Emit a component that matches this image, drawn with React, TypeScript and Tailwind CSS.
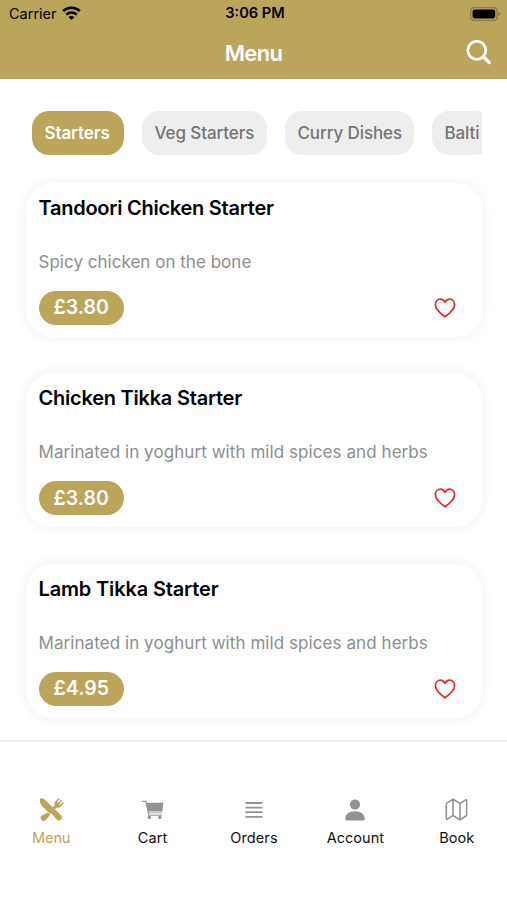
import React, { useState } from 'react';
import { IoMapOutline } from 'react-icons/io5';

interface MenuItem {
    name: string;
    nameClass: string;
    description: string;
    descriptionClass: string;
    price: string;
}

interface Tab {
    label: string;
    icon: React.ReactNode;
    textClass: string;
}

const CATEGORIES = [
    { label: 'Starters', widthClass: 'w-[92px]' },
    { label: 'Veg Starters', widthClass: 'w-[125px]' },
    { label: 'Curry Dishes', widthClass: 'w-[129px]' },
    { label: 'Balti', widthClass: 'w-[60px]' },
];

const ITEMS: MenuItem[] = [
    { name: 'Tandoori Chicken Starter', nameClass: 'tracking-[-0.25px]', description: 'Spicy chicken on the bone', descriptionClass: 'tracking-[0.02px]', price: '£3.80' },
    { name: 'Chicken Tikka Starter', nameClass: 'tracking-[-0.23px]', description: 'Marinated in yoghurt with mild spices and herbs', descriptionClass: 'tracking-[0.07px]', price: '£3.80' },
    { name: 'Lamb Tikka Starter', nameClass: 'tracking-[-0.15px]', description: 'Marinated in yoghurt with mild spices and herbs', descriptionClass: 'tracking-[0.07px]', price: '£4.95' },
];

const WifiIcon: React.FC = () => (
    <svg width="19" height="15" viewBox="0 0 19 15" fill="none" stroke="currentColor" strokeWidth="2.5">
        <path d="M1.2 5.2a11.8 11.8 0 0 1 16.6 0" />
        <path d="M4.3 8.6a7.4 7.4 0 0 1 10.4 0" />
        <path d="M9.5 14 6.6 11.2a4.1 4.1 0 0 1 5.8 0z" fill="currentColor" stroke="none" />
    </svg>
);

const BatteryIcon: React.FC = () => (
    <svg width="31" height="14" viewBox="0 0 31 14">
        <rect x="0.7" y="0.7" width="26.4" height="12.6" rx="3.4" fill="none" stroke="#8a7a43" strokeWidth="1.3" />
        <rect x="2.6" y="2.6" width="22.6" height="8.8" rx="1.8" fill="#000" />
        <path d="M28.5 4.8q1.7.8 1.7 2.2t-1.7 2.2z" fill="#7d6e3b" />
    </svg>
);

const SearchIcon: React.FC = () => (
    <svg width="26" height="26" viewBox="0 0 26 26" fill="none" stroke="currentColor" strokeLinecap="round">
        <circle cx="10.8" cy="10.3" r="9" strokeWidth="2.8" />
        <path d="m17.8 17.3 5.4 5.2" strokeWidth="3.3" />
    </svg>
);

const HeartIcon: React.FC = () => (
    <svg width="22" height="20" viewBox="0 0 22 20" fill="none" stroke="#e8282b" strokeWidth="1.7" strokeLinejoin="round">
        <path d="M11 4.3C9.9 2.1 8.4 1.2 6.4 1.2c-3 0-5 2.4-5 5.3 0 4.6 4.3 8.5 9.6 12.3 5.3-3.8 9.6-7.7 9.6-12.3 0-2.9-2-5.3-5-5.3-2 0-3.5.9-4.6 3.1z" />
    </svg>
);

const CutleryIcon: React.FC = () => (
    <svg width="25" height="25" viewBox="0 0 25 25" fill="currentColor">
        <path d="M1.3 1.4C3.2.9 5 1.8 6.6 3.4L21.8 18.1a3 3 0 0 1 .3 4.2 3 3 0 0 1-4.4.1l-5.1-5.6-1.9-.4L3.2 9.3C1 7.1.2 3.4 1.3 1.4z" />
        <path d="m9 15.6 2.4 2.3-4.7 5a3 3 0 0 1-4.2 0 3 3 0 0 1 0-4.2z" />
        <path d="m13.6 10.2 2.2-2.1c-.7-1.6-.2-2.8 1-4L19.9 1l1 1-2.8 3.1.8.8L22.3 2.7l1 1-3.2 3.4.8.8L24 5.1l.9.9-3 3.3c-1.5 1.5-2.8 1.8-4.2 1.2l-2 2z" />
    </svg>
);

const CartIcon: React.FC = () => (
    <svg width="22" height="20" viewBox="0 0 22 20" fill="currentColor">
        <path d="M.8 1.3h3.1l2.6 12" fill="none" stroke="currentColor" strokeWidth="1.3" strokeLinecap="round" />
        <path d="M4.5 2.7h16.8l-1 8.8H6.3z" />
        <path d="M6.3 12h13.9l-.3 1.6H6.6z" opacity="0.5" />
        <path d="m6.6 13.6-.6 1.6h14" fill="none" stroke="currentColor" strokeWidth="1" />
        <circle cx="7.4" cy="17.4" r="1.7" />
        <circle cx="17.8" cy="17.4" r="1.7" />
    </svg>
);

const LinesIcon: React.FC = () => (
    <svg width="18" height="18" viewBox="0 0 18 18" stroke="currentColor" strokeWidth="1.8">
        <path d="M.5 2h17M.5 6.6h17M.5 11.2h17M.5 15.8h17" />
    </svg>
);

const PersonIcon: React.FC = () => (
    <svg width="20" height="22" viewBox="0 0 20 22" fill="currentColor">
        <circle cx="10" cy="5.6" r="5.1" />
        <path d="M.3 20.2c0-4.9 3.8-7.9 9.7-7.9s9.7 3 9.7 7.9c0 .9-.5 1.3-1.3 1.3H1.6c-.8 0-1.3-.4-1.3-1.3z" />
    </svg>
);

const TABS: Tab[] = [
    { label: 'Menu', icon: <CutleryIcon />, textClass: 'tracking-[-0.1px]' },
    { label: 'Cart', icon: <CartIcon />, textClass: 'tracking-[0.1px]' },
    { label: 'Orders', icon: <LinesIcon />, textClass: 'tracking-[0.1px]' },
    { label: 'Account', icon: <PersonIcon />, textClass: 'tracking-[0.05px]' },
    { label: 'Book', icon: <IoMapOutline size={25} />, textClass: 'tracking-[0.1px]' },
];

const MenuCard: React.FC<{ item: MenuItem }> = ({ item }) => (
    <div className="flex h-[154px] flex-col rounded-[27px] bg-white pr-[26.5px] pl-[12.5px] shadow-[0_0_9px_4px_rgba(0,0,0,0.04)]">
        <h2 className={`mt-[10px] text-[20px] leading-[30px] font-semibold text-black ${item.nameClass}`}>{item.name}</h2>
        <p className={`mt-[27px] text-[17px] leading-[24px] whitespace-nowrap text-[#8e8e8e] ${item.descriptionClass}`}>{item.description}</p>
        <div className="mt-[17px] flex items-center justify-between">
            <span className="flex h-[34px] w-[85.5px] items-center justify-center rounded-full bg-[#bba55b] pt-px text-[19.5px] font-semibold text-white">
                {item.price}
            </span>
            <HeartIcon />
        </div>
    </div>
);

const App: React.FC = () => {
    const [category, setCategory] = useState('Starters');
    const [activeTab, setActiveTab] = useState('Menu');

    return (
        <div className="flex h-[900px] w-[507px] flex-col overflow-hidden bg-white font-['Inter',sans-serif]">
            <header className="h-[79px] shrink-0 bg-[#bba55b]">
                <div className="grid h-[27px] grid-cols-3 items-center pr-[6px] pl-[9px] text-black">
                    <div className="flex items-center gap-[5px] text-[14.5px]">
                        <span className="pt-px">Carrier</span>
                        <WifiIcon />
                    </div>
                    <span className="pt-px text-center text-[14.6px] font-semibold">3:06 PM</span>
                    <div className="flex justify-end">
                        <BatteryIcon />
                    </div>
                </div>
                <div className="grid h-[52px] grid-cols-3 items-center pr-[15px] pl-[15px] text-white">
                    <span />
                    <h1 className="text-center text-[22px] font-semibold tracking-[-0.7px]">Menu</h1>
                    <button className="justify-self-end" aria-label="Search">
                        <SearchIcon />
                    </button>
                </div>
            </header>

            <main className="flex min-h-0 grow flex-col overflow-hidden">
                <div className="mr-[25px] ml-[32px] flex shrink-0 gap-[18px] overflow-hidden pt-[31.5px]">
                    {CATEGORIES.map(c => (
                        <button
                            key={c.label}
                            onClick={() => setCategory(c.label)}
                            className={`h-[44px] shrink-0 rounded-[17px] pt-[2px] pl-[12.5px] text-left text-[17px] tracking-[-0.1px] whitespace-nowrap ${c.widthClass} ${category === c.label ? 'bg-[#bba55b] font-semibold text-white' : 'bg-[#eeeeee] font-medium text-[#757575]'}`}
                        >
                            {c.label}
                        </button>
                    ))}
                </div>
                <div className="flex flex-col gap-[36.5px] pt-[28px] pr-[25px] pl-[26px]">
                    {ITEMS.map(item => (
                        <MenuCard key={item.name} item={item} />
                    ))}
                </div>
            </main>

            <nav className="grid h-[160px] shrink-0 grid-cols-5 items-start border-t-2 border-[#f2f2f2] pt-[54px]">
                {TABS.map(t => (
                    <button
                        key={t.label}
                        onClick={() => setActiveTab(t.label)}
                        className={`flex flex-col items-center ${activeTab === t.label ? 'text-[#bba55b]' : 'text-[#929292]'}`}
                    >
                        <span className="flex h-[27px] items-center pl-px">{t.icon}</span>
                        <span className={`mt-[5px] pl-px text-[14.5px] leading-[20px] ${t.textClass} ${activeTab === t.label ? '' : 'text-[#111111]'}`}>{t.label}</span>
                    </button>
                ))}
            </nav>
        </div>
    );
};

export default App;
